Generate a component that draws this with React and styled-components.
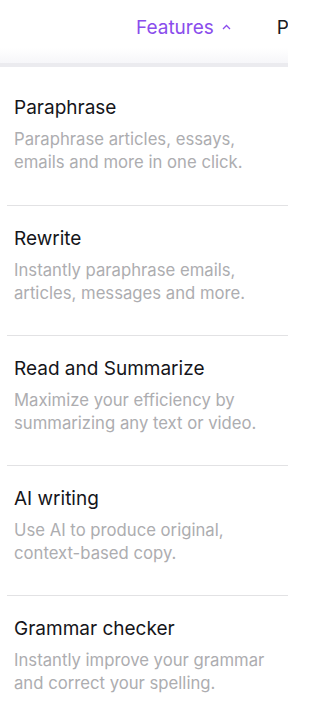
import React from "react";
import styled, { createGlobalStyle } from "styled-components";

const Global = createGlobalStyle`
  html, body { margin: 0; padding: 0; background: #fff; overflow: hidden; }
  body { font-family: Inter, "Noto Sans", sans-serif; -webkit-font-smoothing: antialiased; }
`;

const Page = styled.div`
  width: 288px;
  height: 710px;
  overflow: hidden;
  background: #fff;
`;

const Header = styled.header`
  width: 288px;
  height: 63px;
  display: flex;
  align-items: flex-start;
  background: linear-gradient(to bottom, #fff 0px, #fff 48px, #f6f6f9 63px);
  border-bottom: 4px solid #ebebef;
  white-space: nowrap;
  overflow: hidden;
`;

const NavList = styled.nav`
  display: flex;
  flex: none;
  align-items: center;
  gap: 46px;
  padding: 16px 0 0 136px;
`;

const NavItem = styled.span`
  display: inline-flex;
  align-items: center;
  gap: 8px;
  font-size: 19px;
  line-height: 24px;
  color: ${(p) => (p.$active ? "#8a4dec" : "#1b1b22")};
`;

const Caret = styled.svg`
  width: 9px;
  height: 6px;
  margin-top: -3px;
`;

const List = styled.ul`
  list-style: none;
  margin: 0;
  padding: 0 0 0 7px;
`;

const Item = styled.li`
  padding: 21px 0 30px 7px;
  border-top: 1px solid #e2e2e4;
  &:first-child {
    border-top: none;
    padding-top: 29px;
    padding-bottom: 31px;
  }
`;

const Title = styled.div`
  font-size: 19px;
  line-height: 24px;
  color: #15151a;
  font-weight: 400;
  margin-bottom: 8px;
`;

const Desc = styled.div`
  font-size: 16.7px;
  line-height: 23px;
  color: #adadb0;
  max-width: 266px;
`;

const items = [
  ["Paraphrase", "Paraphrase articles, essays, emails and more in one click."],
  ["Rewrite", "Instantly paraphrase emails, articles, messages and more."],
  ["Read and Summarize", "Maximize your efficiency by summarizing any text or video."],
  ["AI writing", "Use AI to produce original, context-based copy."],
  ["Grammar checker", "Instantly improve your grammar and correct your spelling."],
];

export default function App() {
  return (
    <Page>
      <Global />
      <Header>
        <NavList>
          <NavItem $active>
            Features
            <Caret viewBox="0 0 9 6" fill="none">
              <path d="M1 5L4.5 1.5L8 5" stroke="#8a4dec" strokeWidth="1.3" />
            </Caret>
          </NavItem>
          <NavItem>Pricing</NavItem>
        </NavList>
      </Header>
      <List>
        {items.map(([t, d]) => (
          <Item key={t}>
            <Title>{t}</Title>
            <Desc>{d}</Desc>
          </Item>
        ))}
      </List>
    </Page>
  );
}
